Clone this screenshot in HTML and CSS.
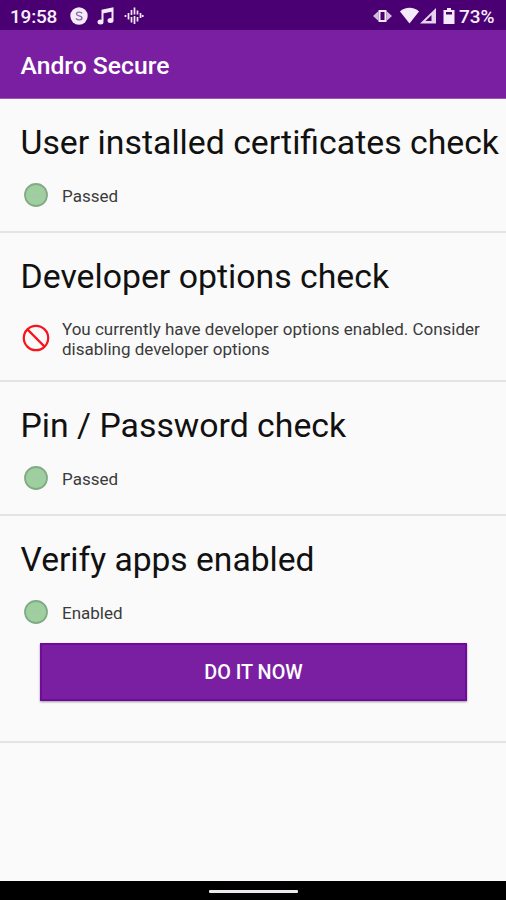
FILE: index.html
```html
<!DOCTYPE html>
<html lang="en">
<head>
<meta charset="utf-8">
<title>Andro Secure</title>
<link rel="stylesheet" href="styles.css">
</head>
<body>
<div class="statusbar">
  <span class="time">19:58</span>
  <svg class="notifications" width="74" height="20" viewBox="0 0 74 20" fill="none" stroke="#f5eafa">
    <circle cx="9" cy="10" r="8.7" fill="#f5eafa" stroke="none"/>
    <path d="M12.200 7.400C11 5.700 6.500 5.600 6.500 8c0 2.500 5.500 1.300 5.500 4 0 2.500-4.600 2.300-6 .3" stroke="#8a68a8" stroke-width="1.400"/>
    <path d="M32.500 15V4.500L42.500 2.500V13.500M32.500 6.500L42.500 4.500" stroke-width="2"/>
    <ellipse cx="30.500" cy="16" rx="3" ry="2.500" fill="#f5eafa" stroke="none"/>
    <ellipse cx="40.500" cy="14.500" rx="3" ry="2.500" fill="#f5eafa" stroke="none"/>
    <path d="M55.500 9v2M58.500 7v6.500M61.500 4v5M61.500 11v5.500M64.500 1.500v7M64.500 10v8M67.500 4.500v4M67.500 11v4.500M70.500 7v5M72.700 9v2" stroke-width="1.700"/>
  </svg>
  <svg class="indicators" width="84" height="20" viewBox="0 0 84 20" fill="#f5eafa">
    <path d="M6.500 5H12.500V15H6.500Z" fill="none" stroke="#f5eafa" stroke-width="2"/>
    <path d="M5.500 5v10L0 10ZM13.500 5v10L19 10Z" opacity=".8"/>
    <path d="M27 5.500C32 .5 41 .5 46 5.500L36.500 17.500Z"/>
    <path fill-rule="evenodd" d="M47 17.500L63 2v15.500ZM58.500 9L52.500 15h6Z" opacity=".9"/>
    <path d="M74 2h4v2h3.500v14h-11V4H74Z"/>
    <path d="M73 6h6v2.500h-6Z" fill="#4a006e"/>
  </svg>
  <span class="battery">73%</span>
</div>
<header class="appbar"><h1>Andro Secure</h1></header>
<main>
  <section class="check">
    <h2>User installed certificates check</h2>
    <div class="result">
      <svg class="icon" viewBox="0 0 28 28"><circle cx="14" cy="14" r="11" fill="#9ed09f" stroke="#83a986" stroke-width="1.800"/><path d="M9.500 13.500l3.500 3 6-5" fill="none" stroke="#a9c5a9" stroke-width="1.600"/></svg>
      <p>Passed</p>
    </div>
  </section>
  <section class="check">
    <h2>Developer options check</h2>
    <div class="result two-line">
      <svg class="icon" viewBox="0 0 28 28" fill="none" stroke="#f7141b" stroke-width="2.200"><circle cx="14" cy="14" r="12.200"/><path d="M5.400 5.400L22.600 22.600"/></svg>
      <p>You currently have developer options enabled. Consider<br>disabling developer options</p>
    </div>
  </section>
  <section class="check">
    <h2>Pin / Password check</h2>
    <div class="result">
      <svg class="icon" viewBox="0 0 28 28"><circle cx="14" cy="14" r="11" fill="#9ed09f" stroke="#83a986" stroke-width="1.800"/><path d="M9.500 13.500l3.500 3 6-5" fill="none" stroke="#a9c5a9" stroke-width="1.600"/></svg>
      <p>Passed</p>
    </div>
  </section>
  <section class="check verify">
    <h2>Verify apps enabled</h2>
    <div class="result">
      <svg class="icon" viewBox="0 0 28 28"><circle cx="14" cy="14" r="11" fill="#9ed09f" stroke="#83a986" stroke-width="1.800"/><path d="M9.500 13.500l3.500 3 6-5" fill="none" stroke="#a9c5a9" stroke-width="1.600"/></svg>
      <p>Enabled</p>
    </div>
    <button class="action" type="button">DO IT NOW</button>
  </section>
</main>
<nav class="navbar"><span class="handle"></span></nav>
</body>
</html>
```
FILE: styles.css
```css
* { box-sizing: border-box; }
body {
  margin: 0;
  height: 900px;
  display: flex;
  flex-direction: column;
  overflow: hidden;
  background: #fafafa;
  color: #111;
  font-family: Roboto, sans-serif;
}
h1, h2, p { margin: 0; }
.statusbar {
  height: 30px;
  padding: 4px 9px 0 10px;
  display: flex;
  align-items: center;
  background: #4a0072;
  color: #f8effc;
  font-size: 19px;
  font-weight: 500;
  line-height: 26px;
  white-space: nowrap;
}
.time { width: 60px; letter-spacing: -0.2px; }
.battery { width: 38px; margin-left: 2px; }
.indicators { margin-left: auto; }
.notifications, .indicators { flex: none; margin-top: -3px; }
.appbar {
  height: 69px;
  padding: 0 20.5px;
  display: flex;
  align-items: center;
  background: #7b1fa2;
  border-bottom: 1px solid #9c58b8;
  color: #fff;
}
.appbar h1 {
  font-size: 24.7px;
  font-weight: 500;
  line-height: 30px;
  padding-top: 4px;
}
main { flex: 1; }
.check {
  padding: 24px 0 22px 20.5px;
  border-bottom: 2px solid #e4e4e4;
}
.check h2 {
  font-size: 33.8px;
  font-weight: 400;
  line-height: 39px;
  white-space: nowrap;
}
.result {
  margin-top: 19px;
  display: flex;
  align-items: center;
  gap: 12px;
  height: 28px;
}
.result p {
  padding-top: 1px;
  font-size: 17px;
  line-height: 20px;
  color: #3b3b3b;
  white-space: nowrap;
}
.two-line { height: 43px; padding-top: 3px; }
.two-line p { padding-top: 2px; }
.icon { width: 28px; height: 28px; margin-left: 1.5px; flex: none; }
.verify { padding-bottom: 21px; }
.verify h2 { font-size: 33.6px; }
.action {
  display: block;
  width: 427px;
  height: 58px;
  margin: 17px 0 19px 19.5px;
  padding: 1px 0 0;
  border: 2px solid #6f0b9a;
  background: #7b1fa2;
  box-shadow: 0 1px 2px rgba(0, 0, 0, .4);
  color: #fff;
  font: 500 19.8px/24px Roboto, sans-serif;
}
.navbar {
  height: 19px;
  display: flex;
  justify-content: center;
  align-items: center;
  background: #000;
  padding-top: 2px;
}
.handle { width: 89px; height: 3px; border-radius: 1px; background: #eee9ee; }
```
